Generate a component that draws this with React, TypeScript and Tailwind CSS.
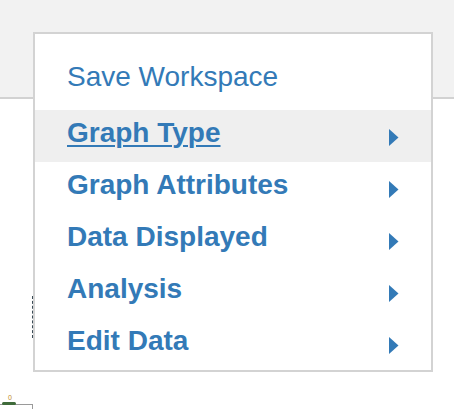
import React from "react";

const items = [
  { id: "1", text: "Graph Type", active: true },
  { id: "2", text: "Graph Attributes" },
  { id: "3", text: "Data Displayed" },
  { id: "4", text: "Analysis" },
  { id: "5", text: "Edit Data" },
];

const Caret = () => (
  <svg width="10" height="17" viewBox="0 0 10 17" className="shrink-0">
    <path d="M0 0 L9.5 8.5 L0 17 Z" fill="#337ab7" />
  </svg>
);

export default function App() {
  return (
    <div
      className="relative w-[454px] h-[409px] overflow-hidden bg-white"
      style={{ fontFamily: '"Liberation Sans", Arial, sans-serif' }}
    >
      {/* top toolbar strip */}
      <div className="h-[99px] bg-[#f2f2f2] border-b-2 border-[#d2d2d2]" />

      {/* bits of the graph behind the menu */}
      <div className="absolute left-[32px] top-[296px] h-[42px] border-l border-dashed border-[#3a4a55]" />
      <div className="absolute left-[0px] top-[404px] w-[33px] h-[6px] border-t border-r border-[#9a9a9a]" />
      <div className="absolute left-[2px] top-[402px] w-[14px] h-[3px] bg-[#3f6b3a] rounded-sm" />
      <span className="absolute left-[8px] top-[394px] text-[7px] leading-none text-[#c08a2a]">0</span>

      {/* dropdown menu */}
      <div className="absolute left-[33px] top-[32px] w-[400px] h-[340px] bg-white border-2 border-[#d3d3d3]">
        <div className="pl-[32px] pt-[22px] pb-[12px]">
          <span className="block text-[28px] leading-[42px] text-[#337ab7]">
            Save Workspace
          </span>
        </div>
        {items.map((item) => (
          <div
            key={item.id}
            className={`flex h-[52px] pl-[32px] pr-[32px] ${item.active ? "bg-[#efefef]" : ""}`}
          >
            <span
              className={`pt-[2px] text-[28px] leading-[42px] font-bold text-[#337ab7] ${
                item.active ? "underline decoration-2 underline-offset-[3px]" : ""
              }`}
            >
              {item.text}
            </span>
            <div className="ml-auto self-center pt-[2px]">
              <Caret />
            </div>
          </div>
        ))}
      </div>
    </div>
  );
}
